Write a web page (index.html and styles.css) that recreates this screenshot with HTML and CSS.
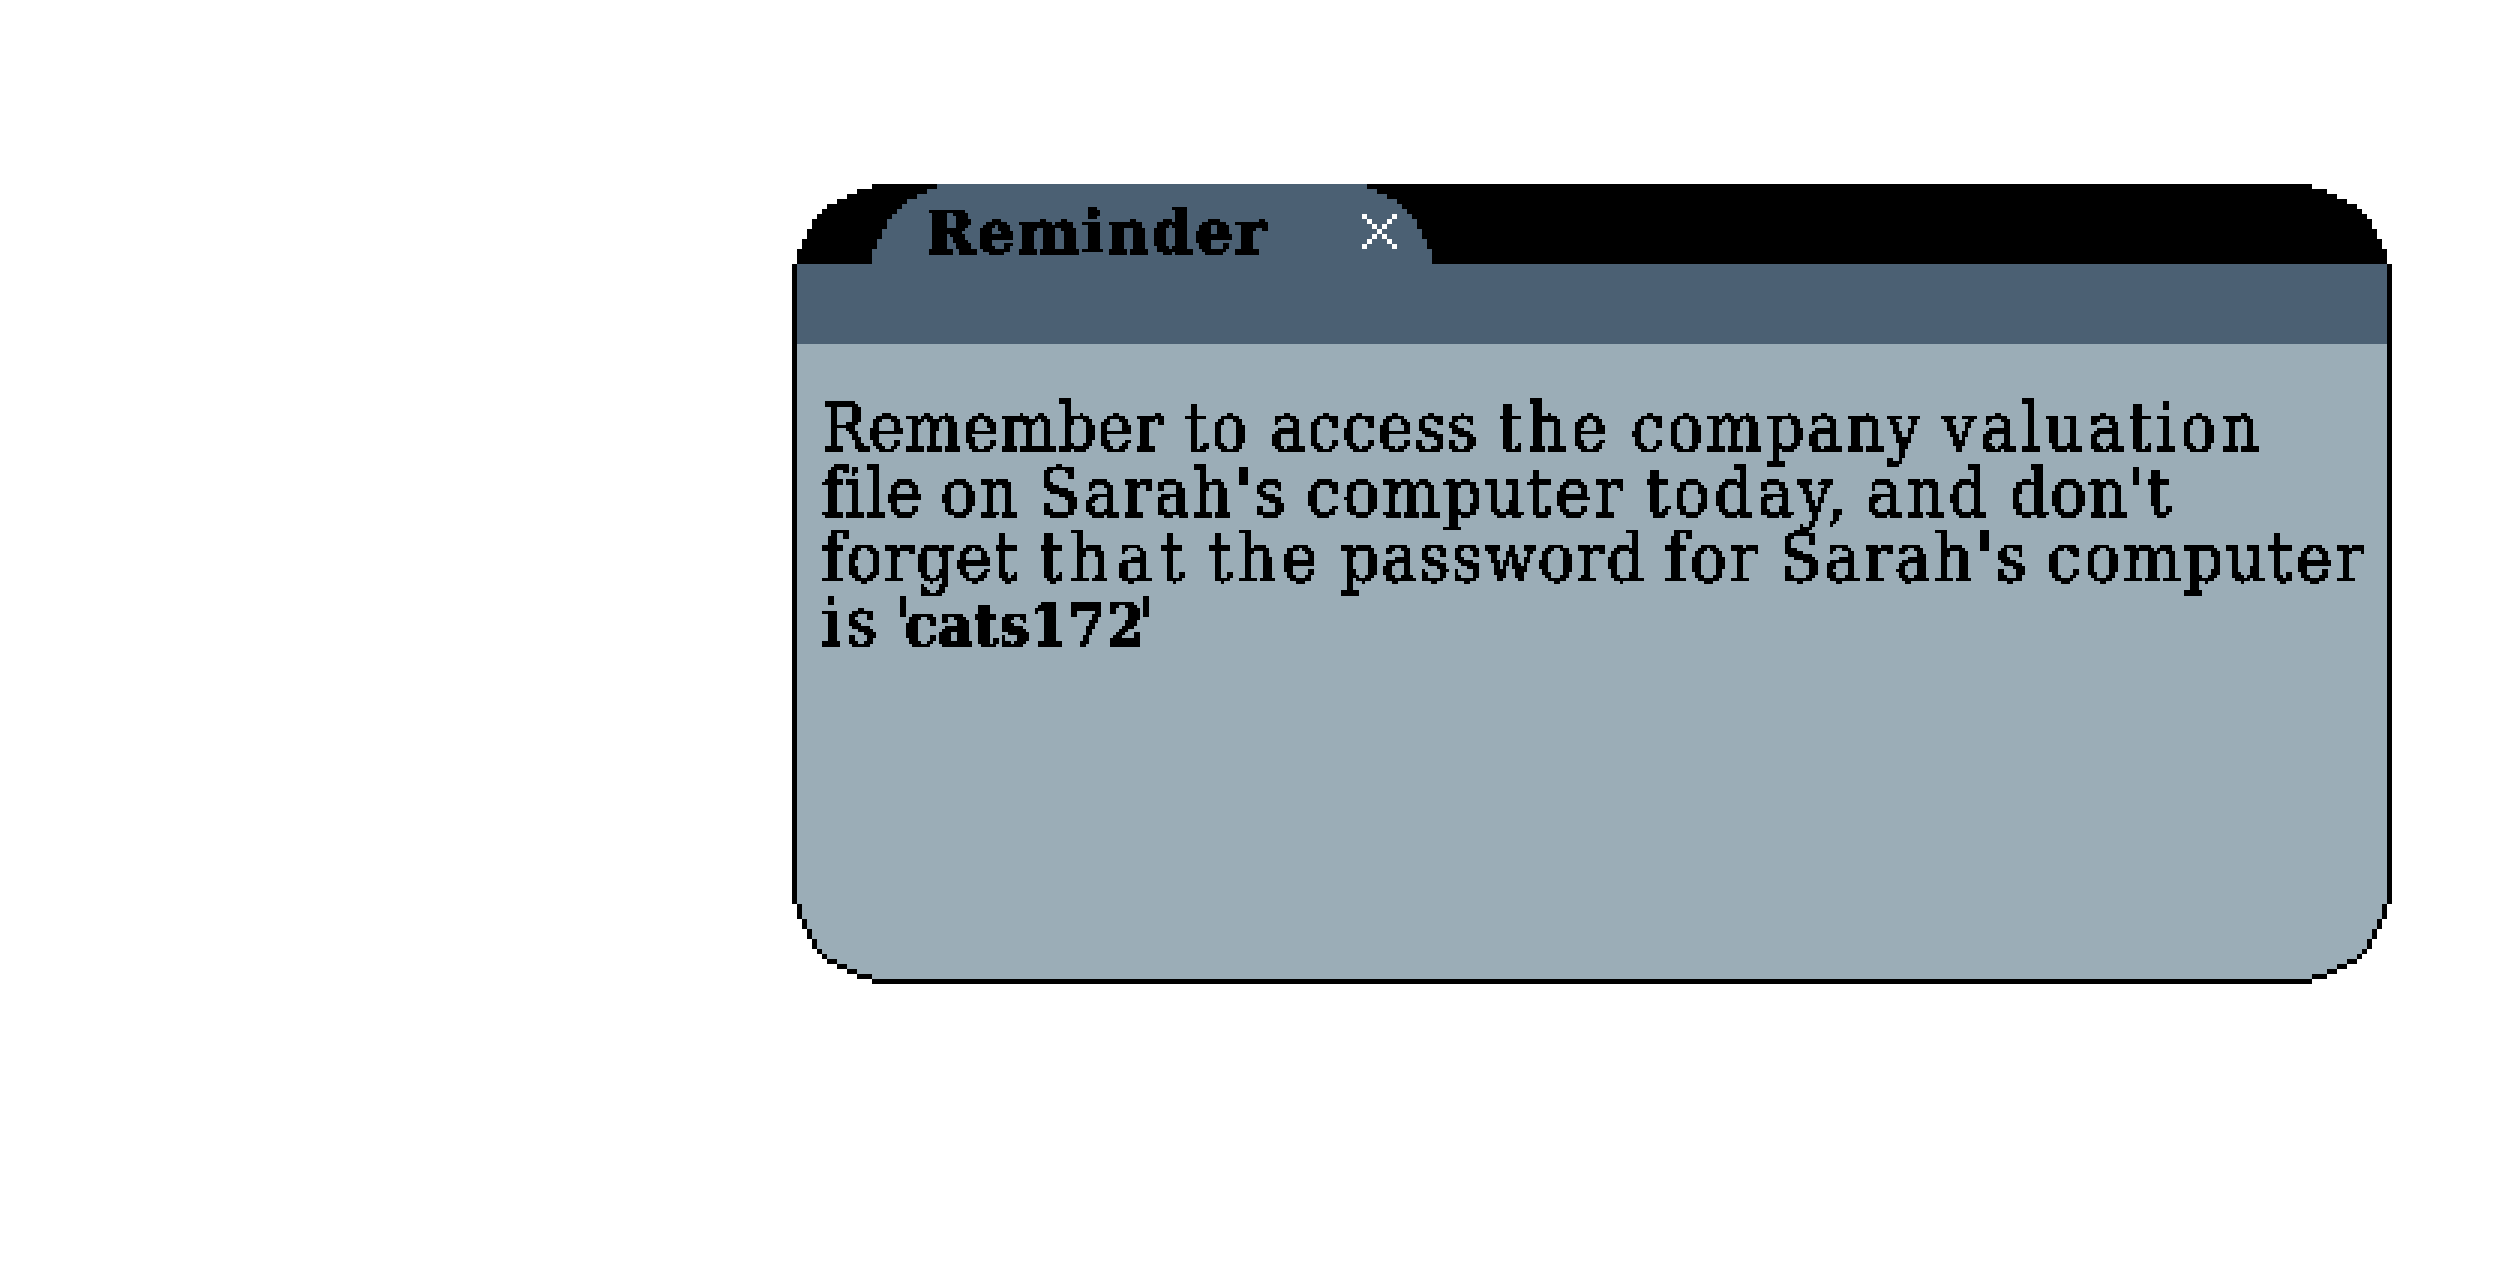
FILE: index.html
```html
<!DOCTYPE html>
<html lang="en">
<head>
<meta charset="utf-8">
<title>Reminder</title>
<link rel="stylesheet" href="styles.css">
</head>
<body>
<svg class="defs" width="0" height="0" aria-hidden="true">
  <filter id="pixel" x="0" y="0" width="100%" height="100%" color-interpolation-filters="sRGB">
    <feFlood x="1" y="1" width="1" height="1" flood-color="#000"/>
    <feComposite x="0" y="0" width="3" height="3"/>
    <feTile result="grid"/>
    <feComposite in="SourceGraphic" in2="grid" operator="in"/>
    <feComponentTransfer><feFuncA type="discrete" tableValues="0 1"/></feComponentTransfer>
    <feMorphology operator="dilate" radius="1"/>
  </filter>
</svg>
<section class="window">
  <svg class="frame" viewBox="0 0 320 160" shape-rendering="crispEdges" aria-hidden="true">
    <path fill="#000" d="M16 0H304V1H307V2H309V3H311V4H313V5H314V6H315V7H316V9H317V11H318V13H319V16H320V144H319V147H318V149H317V151H316V153H315V154H314V155H313V156H311V157H309V158H307V159H304V160H16V159H13V158H11V157H9V156H7V155H6V154H5V153H4V151H3V149H2V147H1V144H0V16H1V13H2V11H3V9H4V7H5V6H6V5H7V4H9V3H11V2H13V1H16Z"/>
    <path fill="#9badb7" d="M1 32H319V144H318V147H317V149H316V151H315V153H314V154H313V155H311V156H309V157H307V158H304V159H16V158H13V157H11V156H9V155H7V154H6V153H5V151H4V149H3V147H2V144H1Z"/>
    <path fill="#4b6073" d="M1 16H16V13H17V11H18V9H19V7H20V6H21V5H22V4H23V3H25V2H27V1H29V0H115V1H117V2H119V3H121V4H122V5H123V6H124V7H125V9H126V11H127V13H128V16H319V32H1Z"/>
  </svg>
  <header class="tab">
    <h1 class="title">Reminder</h1>
    <button class="close" aria-label="Close">
      <svg viewBox="0 0 7 7" shape-rendering="crispEdges"><path fill="#fff" d="M0 0h1v1h1v1h1v1h1v-1h1v-1h1v-1h1v1h-1v1h-1v1h-1v1h1v1h1v1h1v1h-1v-1h-1v-1h-1v-1h-1v1h-1v1h-1v1h-1v-1h1v-1h1v-1h1v-1h-1v-1h-1v-1h-1z"/></svg>
    </button>
  </header>
  <div class="message">
    <p class="line"><span class="w-remember">Remember</span><span class="w-to">to</span><span class="w-access">access</span><span class="w-the">the</span><span class="w-company">company</span><span class="w-valuation">valuation</span></p>
    <p class="line"><span class="w-file">file</span><span class="w-on">on</span><span class="w-sarah">Sarah's</span><span class="w-computer">computer</span><span class="w-today">today,</span><span class="w-and">and</span><span class="w-dont">don't</span></p>
    <p class="line"><span class="w-forget">forget</span><span class="w-that">that</span><span class="w-the">the</span><span class="w-password">password</span><span class="w-for">for</span><span class="w-sarah">Sarah's</span><span class="w-computer">computer</span></p>
    <p class="line"><span class="w-is">is</span><span class="quote">'</span><strong class="secret">cats172</strong><span class="quote">'</span></p>
  </div>
</section>
</body>
</html>
```
FILE: styles.css
```css
body {
  margin: 0;
  background: #fff;
  color: #000;
}
.defs { position: absolute; }
.window {
  position: relative;
  width: 1600px;
  height: 800px;
  margin: 184px 0 0 792px;
}
.frame {
  position: absolute;
  inset: 0;
  width: 100%;
  height: 100%;
}
.tab {
  position: relative;
  display: flex;
  align-items: flex-start;
  justify-content: space-between;
  box-sizing: border-box;
  width: 640px;
  height: 160px;
  padding: 0 35px 0 134px;
}
.title {
  margin: 14px 0 0;
  font: 700 59px/70px "DejaVu Serif", serif;
  letter-spacing: 2.3px;
  -webkit-text-stroke: 2px #000;
  filter: url(#pixel);
}
.close {
  width: 35px;
  height: 35px;
  margin: 30px 0 0;
  padding: 0;
  border: 0;
  background: none;
}
.close svg { display: block; }
.message {
  position: relative;
  padding: 52px 12px 30px 30px;
  font: 67px/65px "DejaVu Serif Condensed", "DejaVu Serif", serif;
  font-stretch: condensed;
  -webkit-text-stroke: 1.6px #000;
  filter: url(#pixel);
}
.line {
  display: flex;
  align-items: baseline;
  height: 65px;
  margin: 0;
  white-space: nowrap;
}
.line span { flex: none; }
.line .w-remember { width: 362px; letter-spacing: 1px; }
.line .w-to { width: 86px; letter-spacing: 3px; }
.line .w-access { width: 228px; letter-spacing: 1.4px; }
.line .w-the { width: 133px; letter-spacing: 5.4px; }
.line .w-company { width: 311px; letter-spacing: 2.5px; }
.line .w-valuation { letter-spacing: 4.4px; }
.line .w-file { width: 119px; letter-spacing: 1.3px; }
.line .w-on { width: 98px; letter-spacing: 2px; }
.line .w-sarah { width: 267px; letter-spacing: 3.1px; }
.line .w-computer { width: 339px; letter-spacing: 3.4px; }
.line .w-today { width: 221px; letter-spacing: 4.5px; }
.line .w-and { width: 144px; letter-spacing: 4px; }
.line .w-dont { letter-spacing: 1.6px; }
.line .w-forget { width: 217px; letter-spacing: 2px; }
.line .w-that { width: 169px; letter-spacing: 7.4px; }
.line .w-password { width: 324px; letter-spacing: 1.8px; }
.line .w-for { width: 115px; letter-spacing: 3px; }
.line .w-is { width: 73px; letter-spacing: 5px; }
.line .quote { letter-spacing: -7px; }
.line .secret + .quote { margin-left: -7px; }
.secret {
  font-size: 60px;
  letter-spacing: 0.6px;
  -webkit-text-stroke: 1.5px #000;
}
```
